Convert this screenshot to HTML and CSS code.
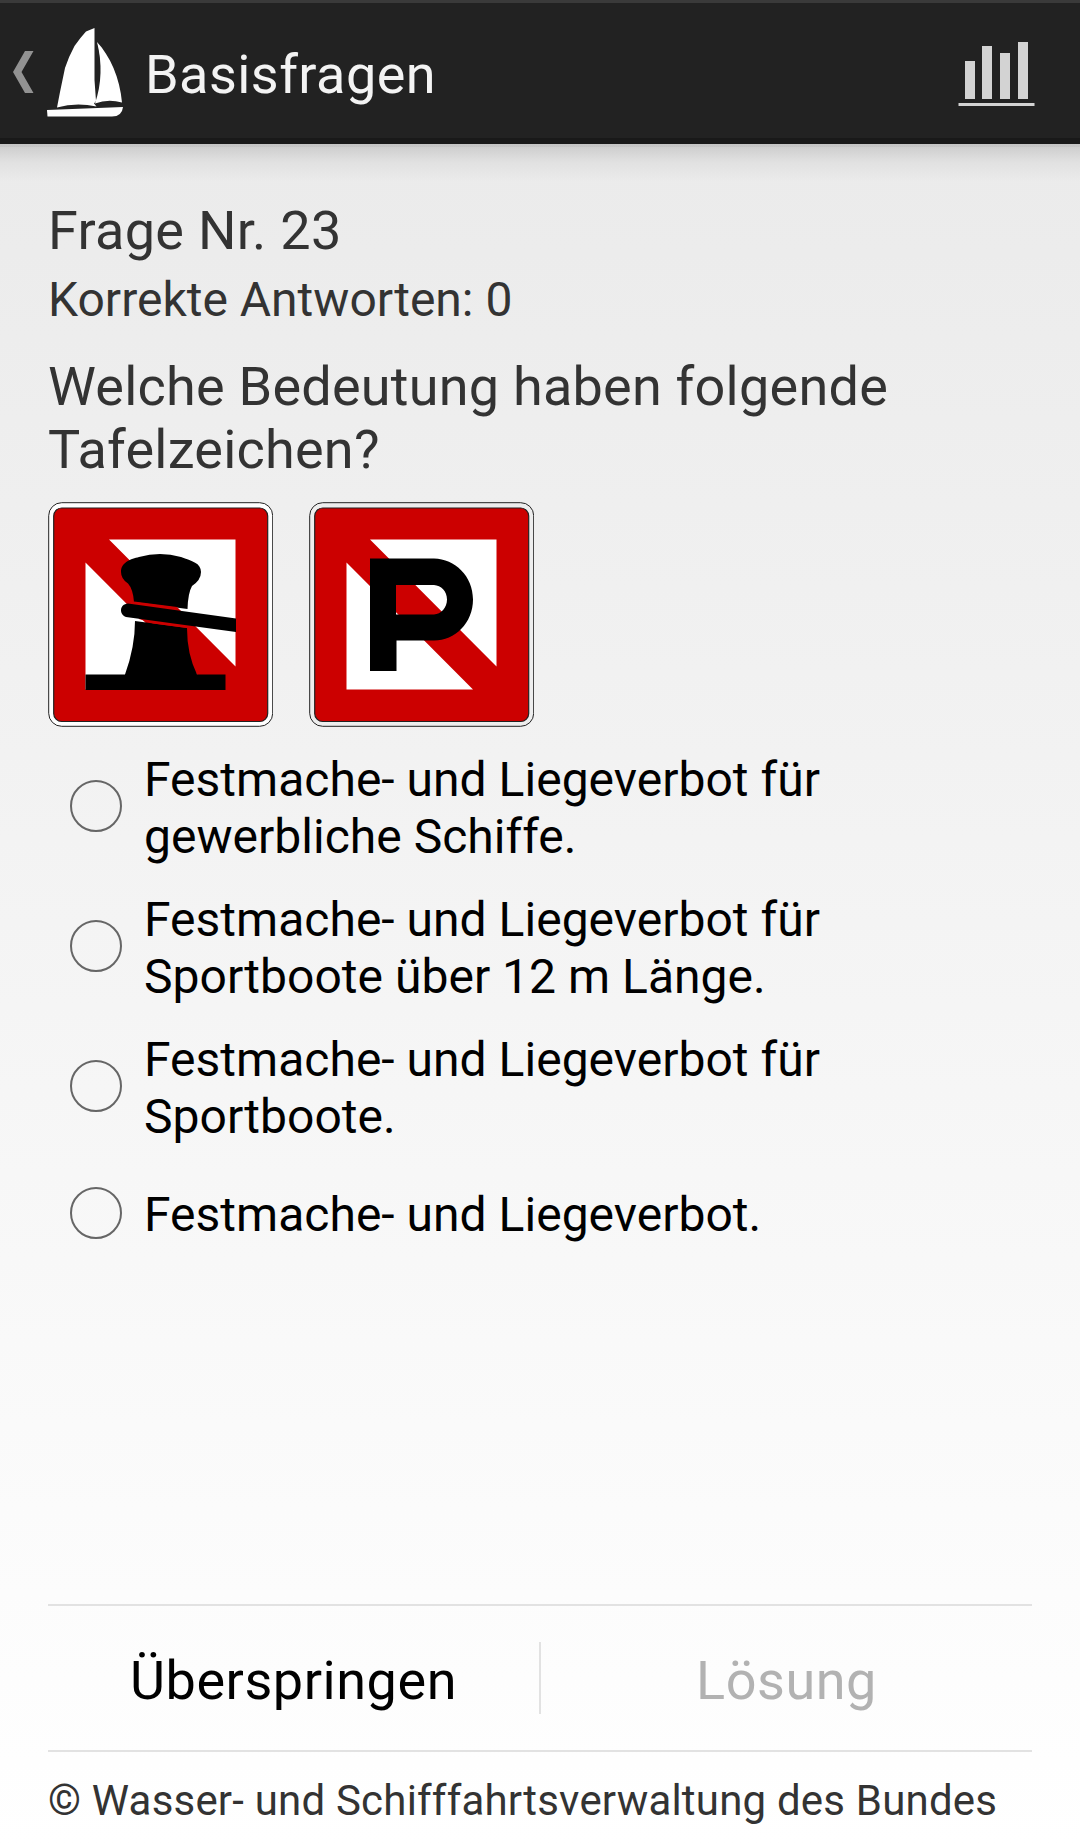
FILE: index.html
```html
<!DOCTYPE html>
<html lang="de">
<head>
<meta charset="utf-8">
<title>Basisfragen</title>
<link rel="stylesheet" href="styles.css">
</head>
<body>
<div class="screen">
  <header class="bar">
    <svg class="bar-nav" width="128" height="129" viewBox="0 3 128 129" aria-hidden="true">
      <path class="chevron" d="M25 51H33.5L21.5 72L33.5 93H25L13 72Z"/>
      <g class="boat">
        <path d="M94.5 28V80L96 101L94 103.500L96.500 106.500Q76 102 57 107.500L60 92L65 68Q69 56 74.500 46Q80 38 86 31.500Z"/>
        <path d="M97 42C110 56 120 78 122 102.500Q108 98.500 95 103.500Q105 74 97 42Z"/>
        <path d="M47 110L123 107Q122 116.500 112 116.500H47.500Z"/>
      </g>
      <path class="boat-gap" d="M95.500 40V79L96.200 92Q103.500 68 96.500 42Z"/>
    </svg>
    <h1 class="bar-title">Basisfragen</h1>
    <svg class="bar-stats" width="77" height="64" viewBox="0 0 77 64" aria-hidden="true">
      <path d="M7 19h10v38H7zM24 4h10v53H24zM42 11h10v46H42zM60 0h10v57H60zM.5 61h76v3H.5z"/>
    </svg>
  </header>
  <main class="content">
    <p class="number">Frage Nr. 23</p>
    <p class="correct">Korrekte Antworten: 0</p>
    <h2 class="question">Welche Bedeutung haben folgende Tafelzeichen?</h2>
    <div class="signs">
      <svg class="sign" viewBox="0 0 225 225" role="img" aria-label="Festmacheverbot">
        <rect class="rim" x=".7" y=".7" width="224" height="223.600" rx="13"/>
        <rect class="plate" x="5.700" y="6" width="214" height="213.500" rx="8"/>
        <path class="white" d="M61 37.500H187.500V164.500ZM37.500 60.500L164 187.500H37.500Z"/>
        <path class="red" d="M132 172.500H188V188H132Z"/>
        <path d="M37.500 172.500H77Q87 145 87 119L139 126Q139 152 149 172.500H177.500V188H37.500Z"/>
        <path d="M86 100Q85 87 80 81.500Q73 77 73 70C73 60 83 57 91 55Q112 49 133 55C144 59 153 61 153 70Q153 78 144 84Q140 91 139.500 107Z"/>
        <path class="red" d="M86 99.500L129 105L139 115V126L105 121.500L91 117Z"/>
        <path d="M80 101.500L188 116.500V130L78 115C71 113 71 102 80 101.500Z"/>
      </svg>
      <svg class="sign sign-clear" viewBox="0 0 225 225" role="img" aria-label="Liegeverbot">
        <rect class="rim" x=".7" y=".7" width="224" height="223.600" rx="13"/>
        <rect class="plate" x="5.700" y="6" width="214" height="213.500" rx="8"/>
        <path class="white" d="M61 37.500H187.500V164.500ZM37.500 60.500L164 187.500H37.500Z"/>
        <path fill-rule="evenodd" d="M61 56.500H125C146 57 164 74 164 97.500S146 138.500 125 138.500H87.500V169H61ZM87 83V112.500H125C132 112 138 106 138 97.500S132 83.500 125 83Z"/>
      </svg>
    </div>
    <div class="options">
      <label class="option"><input class="radio" type="radio" name="answer"><span>Festmache- und Liegeverbot für gewerbliche Schiffe.</span></label>
      <label class="option"><input class="radio" type="radio" name="answer"><span>Festmache- und Liegeverbot für Sportboote über 12 m Länge.</span></label>
      <label class="option"><input class="radio" type="radio" name="answer"><span>Festmache- und Liegeverbot für Sportboote.</span></label>
      <label class="option option-single"><input class="radio" type="radio" name="answer"><span>Festmache- und Liegeverbot.</span></label>
    </div>
    <div class="actions">
      <button class="action">Überspringen</button>
      <span class="divider"></span>
      <button class="action" disabled>Lösung</button>
    </div>
    <footer class="source">© Wasser- und Schifffahrtsverwaltung des Bundes</footer>
  </main>
</div>
</body>
</html>
```
FILE: styles.css
```css
* { box-sizing: border-box; }
body { margin: 0; font-family: Roboto, "Liberation Sans", sans-serif; font-variant-ligatures: none; }
h1, h2, p { margin: 0; font-weight: 400; }

.screen {
  height: 1845px;
  display: flex;
  flex-direction: column;
  background: linear-gradient(#e9e9e9, #fff);
}

.bar {
  height: 144px;
  flex: none;
  display: flex;
  align-items: center;
  padding-right: 46px;
  background: #222;
  border-top: 3px solid #3a3a3a;
  border-bottom: 6px solid #191919;
}
.bar-nav { flex: none; align-self: flex-start; }
.chevron { fill: #929292; }
.boat { fill: #fff; }
.boat-gap { fill: #222; }
.bar-title { flex: 1; margin: 7px 0 0 17px; font-size: 54px; line-height: 63px; letter-spacing: .45px; color: #f3f3f3; }
.bar-stats { flex: none; align-self: flex-start; margin-top: 39px; margin-right: -1px; fill: #d3d3d3; }

.content {
  flex: 1;
  display: flex;
  flex-direction: column;
  padding: 55px 48px 20px;
  color: #333;
  background: linear-gradient(rgba(0,0,0,.16) 0 3px, rgba(0,0,0,.12) 3px, rgba(0,0,0,.045) 18px, transparent 38px);
}
.number { font-size: 54px; line-height: 63px; letter-spacing: .3px; }
.correct { margin-top: 9px; font-size: 48px; line-height: 57px; }
.question { margin-top: 27px; font-size: 54px; line-height: 63px; letter-spacing: .23px; }

.signs { display: flex; gap: 36px; margin-top: 21px; }
.sign { width: 225px; height: 225px; display: block; }
.rim { fill: #fff; stroke: #222; stroke-width: 1; }
.sign-clear .rim { fill: #eee; }
.plate { fill: #c00; stroke: #222; stroke-width: 1.2px; }
.white { fill: #fff; }
.red { fill: #c00; }

.options { margin-top: 11px; color: #000; font-size: 48px; line-height: 57px; letter-spacing: .02px; }
.option { min-height: 110px; padding: 13px 100px 13px 22px; display: flex; align-items: center; gap: 22px; }
.radio { appearance: none; flex: none; width: 52px; height: 52px; margin: 0 0 4px; border: 2px solid #666; border-radius: 50%; }
.option-single { padding-top: 14px; padding-bottom: 12px; }
.option-single .radio { margin-bottom: 2px; }

.actions {
  height: 148px;
  margin-top: auto;
  display: grid;
  grid-template-columns: 1fr 2px 1fr;
  align-items: center;
  border-top: 2px solid #e2e2e2;
  border-bottom: 2px solid #e2e2e2;
}
.action { padding: 5px 0 0; border: 0; background: none; font: inherit; font-size: 54px; line-height: 63px; letter-spacing: .55px; color: #000; }
.action:disabled { color: #b2b2b2; }
.divider { height: 72px; background: #e2e2e2; }
.source { margin-top: 24px; font-size: 42px; line-height: 49px; letter-spacing: .2px; white-space: nowrap; }
```
